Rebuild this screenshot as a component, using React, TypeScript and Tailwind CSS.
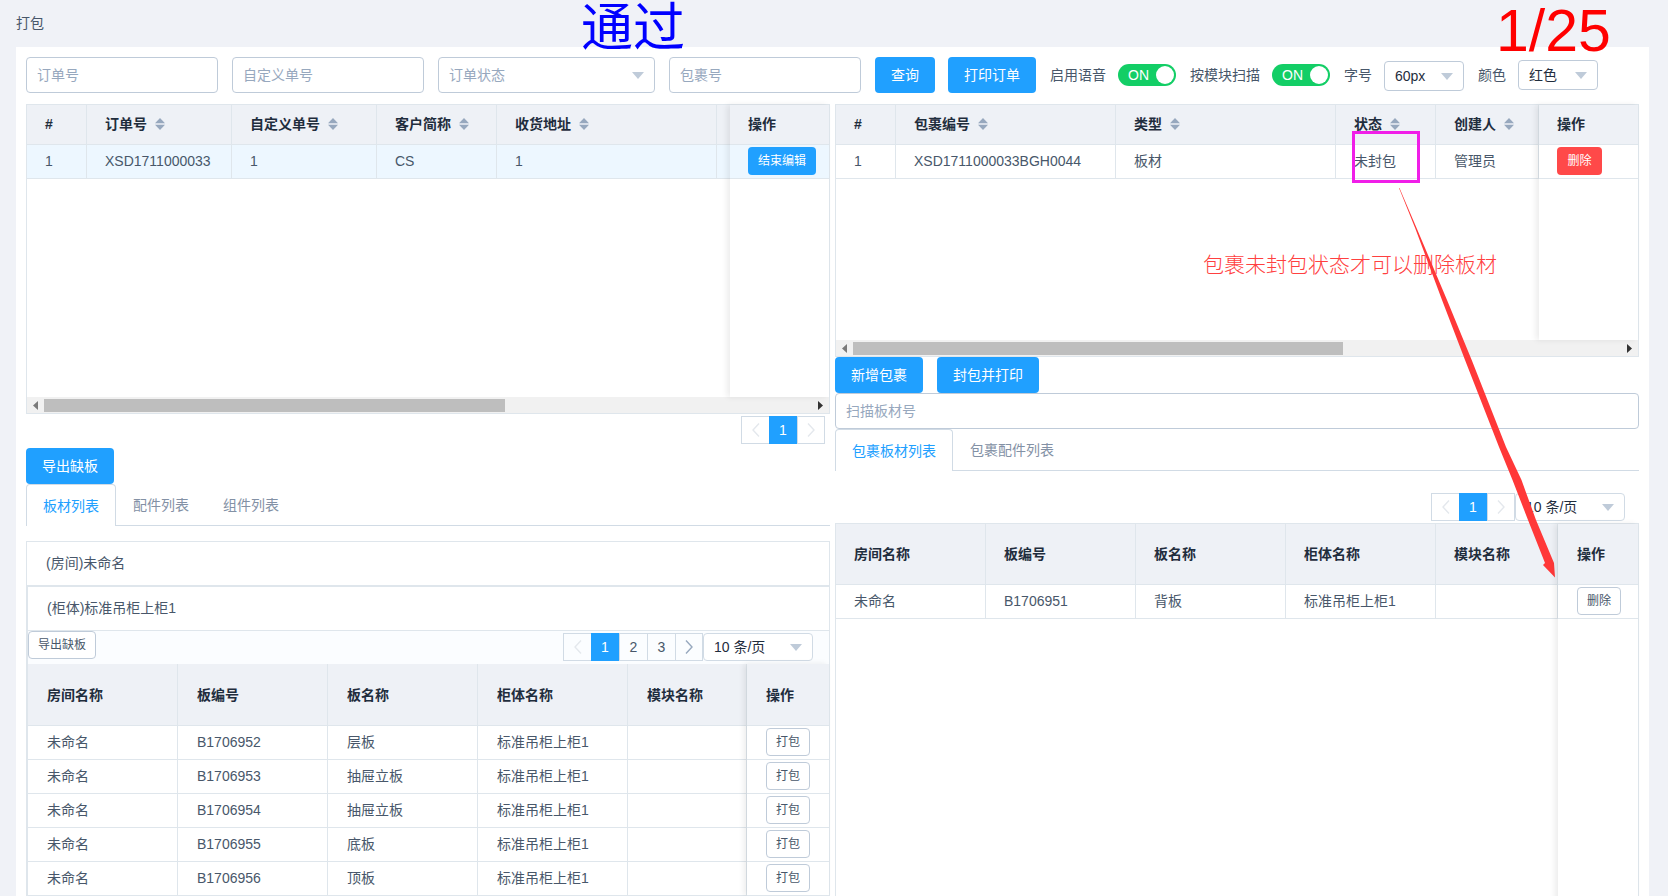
import type { ReactNode } from "react";

const orderCols = "grid-cols-[60px_145px_145px_120px_220px_13px]";
const packCols = "grid-cols-[60px_220px_220px_100px_103px]";
const boardCols = "grid-cols-[150px_150px_150px_150px_122px]";
const listCols = "grid-cols-[150px_150px_150px_150px_119px]";

function SortIcon() {
  return (
    <svg width="10" height="12" viewBox="0 0 10 12" className="ml-2 shrink-0" fill="#97a8be">
      <polygon points="0,5.2 5,0 10,5.2" />
      <polygon points="0,6.8 10,6.8 5,12" />
    </svg>
  );
}

function Caret() {
  return (
    <svg width="12" height="7" viewBox="0 0 12 7" fill="#bfcbd9" className="shrink-0">
      <polygon points="0,0 12,0 6,7" />
    </svg>
  );
}

function Chevron({ left, active }: { left?: boolean; active?: boolean }) {
  return (
    <svg width="8" height="14" viewBox="0 0 8 14" fill="none" stroke={active ? "#97a8be" : "#e4e8ed"} strokeWidth="1.4">
      <polyline points={left ? "7,0.5 1,7 7,13.5" : "1,0.5 7,7 1,13.5"} />
    </svg>
  );
}

function Button({ children, className = "" }: { children: ReactNode; className?: string }) {
  return (
    <button className={`flex h-9 items-center justify-center rounded-[4px] bg-[#20a0ff] px-4 text-sm text-white ${className}`}>
      {children}
    </button>
  );
}

function SmallButton({ children }: { children: ReactNode }) {
  return (
    <button className="flex h-7 w-[44px] items-center justify-center rounded-[4px] border border-[#bfcbd9] bg-white text-xs text-[#48576a]">
      {children}
    </button>
  );
}

function TextInput({ placeholder, className = "" }: { placeholder: string; className?: string }) {
  return (
    <input
      placeholder={placeholder}
      className={`h-9 rounded-[4px] border border-[#bfcbd9] bg-white px-[10px] text-sm text-[#1f2d3d] outline-none placeholder:text-[#97a8be] ${className}`}
    />
  );
}

function Select({ value, muted, className = "" }: { value: string; muted?: boolean; className?: string }) {
  return (
    <div className={`flex items-center justify-between rounded-[4px] border border-[#bfcbd9] bg-white pl-[10px] pr-[10px] text-sm ${muted ? "text-[#97a8be]" : "text-[#1f2d3d]"} ${className}`}>
      <span>{value}</span>
      <Caret />
    </div>
  );
}

function Switch() {
  return (
    <div className="flex h-[22px] w-[58px] items-center justify-between rounded-full bg-[#13ce66] pl-[10px] pr-[2px] text-sm text-white">
      <span>ON</span>
      <span className="h-[18px] w-[18px] rounded-full bg-white" />
    </div>
  );
}

function Pagination({ pages, hasNext }: { pages: number[]; hasNext?: boolean }) {
  return (
    <div className="flex h-7 text-sm text-[#48576a]">
      <div className="flex w-7 items-center justify-center border-y border-l border-[#d1dbe5]">
        <Chevron left />
      </div>
      {pages.map((p) => (
        <div
          key={p}
          className={
            p === 1
              ? "flex w-7 items-center justify-center bg-[#20a0ff] text-white"
              : "flex w-7 items-center justify-center border-y border-l border-[#d1dbe5]"
          }
        >
          {p}
        </div>
      ))}
      <div className="flex w-7 items-center justify-center border border-[#d1dbe5]">
        <Chevron active={hasNext} />
      </div>
    </div>
  );
}

function PageSize() {
  return <Select value="10 条/页" className="h-7 w-[110px] !border-[#d1dbe5]" />;
}

function Tabs({ items }: { items: string[] }) {
  return (
    <div className="flex h-[42px] border-b border-[#d1dbe5] text-sm">
      {items.map((t, i) => (
        <div
          key={t}
          className={
            i === 0
              ? "-mb-px flex h-[42px] items-center rounded-t-[4px] border-x border-t border-[#d1dbe5] bg-white px-4 text-[#20a0ff]"
              : "flex items-center px-[17px] text-[#8391a5]"
          }
        >
          {t}
        </div>
      ))}
    </div>
  );
}

function ScrollBar({ thumb }: { thumb: string }) {
  return (
    <div className="flex h-4 items-center bg-[#f1f1f1]">
      <div className="flex w-[17px] justify-center">
        <svg width="5" height="9" viewBox="0 0 5 9" fill="#7a7a7a"><polygon points="5,0 5,9 0,4.5" /></svg>
      </div>
      <div className={`mt-px h-[13px] bg-[#bebebe] ${thumb}`} />
      <div className="ml-auto flex w-[17px] justify-center">
        <svg width="5" height="9" viewBox="0 0 5 9" fill="#333"><polygon points="0,0 0,9 5,4.5" /></svg>
      </div>
    </div>
  );
}

function HeadRow({ cols, labels, sortable, height, cellClass = "pl-[18px]" }: { cols: string; labels: string[]; sortable?: boolean; height: string; cellClass?: string }) {
  return (
    <div className={`grid ${cols} ${height} bg-[#eef1f6] text-sm font-bold text-[#1f2d3d]`}>
      {labels.map((l, i) => (
        <div key={i} className={`flex items-center border-b border-r border-[#dfe6ec] ${cellClass}`}>
          {l}
          {sortable && l !== "#" && l !== "" ? <SortIcon /> : null}
        </div>
      ))}
    </div>
  );
}

function BodyRow({ cols, cells, current, cellClass = "pl-[18px]" }: { cols: string; cells: string[]; current?: boolean; cellClass?: string }) {
  return (
    <div className={`grid h-[34px] ${cols} text-sm text-[#48576a] ${current ? "bg-[#edf7ff]" : "bg-white"}`}>
      {cells.map((c, i) => (
        <div key={i} className={`flex items-center overflow-hidden whitespace-nowrap border-b border-r border-[#dfe6ec] pb-[2px] ${cellClass}`}>
          {c}
        </div>
      ))}
    </div>
  );
}

function FixedColumn({ width, headClass, children }: { width: string; headClass: string; children: ReactNode }) {
  return (
    <div className={`relative z-10 shrink-0 bg-white shadow-[-3px_0_6px_rgba(0,0,0,0.08)] ${width}`}>
      <div className={`flex items-center border-b border-[#dfe6ec] bg-[#eef1f6] text-sm font-bold text-[#1f2d3d] ${headClass}`}>
        操作
      </div>
      {children}
    </div>
  );
}

function ActionCell({ children, current, pad = "pl-[18px]" }: { children: ReactNode; current?: boolean; pad?: string }) {
  return (
    <div className={`flex h-[34px] items-center border-b border-[#dfe6ec] pb-px ${pad} ${current ? "bg-[#edf7ff]" : "bg-white"}`}>
      {children}
    </div>
  );
}

const boards = [
  ["B1706952", "层板"],
  ["B1706953", "抽屉立板"],
  ["B1706954", "抽屉立板"],
  ["B1706955", "底板"],
  ["B1706956", "顶板"],
];

function Annotations() {
  return (
    <>
      <span className="absolute left-[581px] top-0 text-[52px] leading-[56px] text-[#0000ff]">通过</span>
      <span className="absolute left-[1496px] top-0 text-[59px] leading-[62px] text-[#ff0000]">1/25</span>
      <span className="absolute left-[1203px] top-[249px] text-[21px] font-light leading-[32px] text-[#ff4040]">包裹未封包状态才可以删除板材</span>
      <div className="absolute left-[1352px] top-[131px] h-[52px] w-[68px] border-[3px] border-[#f01ee8]" />
      <div className="absolute left-[1569px] top-[579px] h-[44px] w-[60px] border-[3px] border-[#f01ee8]" />
      <svg className="absolute left-0 top-0" width="1668" height="896" fill="#ff3838">
        <polygon points="1399.5,188 1417,229 1447,300 1471.7,360 1506,447 1521.5,480 1536,520 1554,563 1555,577.5 1543,565 1545,563 1528,520 1512.5,480 1499,447 1465,360 1442,300 1415.5,229 1399,188" />
      </svg>
    </>
  );
}

export default function App() {
  return (
    <div className="relative h-[896px] w-[1668px] overflow-hidden bg-[#f0f2f7] font-['Liberation_Sans','Noto_Sans_CJK_SC',sans-serif]">
      <div className="flex h-[47px] items-center pb-[2px] pl-4 text-sm text-[#48576a]">打包</div>

      <div className="ml-4 h-[849px] w-[1633px] bg-white px-[10px] pt-[10px]">
        <div className="flex h-9 items-center text-sm text-[#48576a]">
          <TextInput placeholder="订单号" className="w-[192px]" />
          <TextInput placeholder="自定义单号" className="ml-[14px] w-[192px]" />
          <Select value="订单状态" muted className="ml-[14px] h-9 w-[217px]" />
          <TextInput placeholder="包裹号" className="ml-[14px] w-[192px]" />
          <Button className="ml-[14px]">查询</Button>
          <Button className="ml-[13px]">打印订单</Button>
          <span className="ml-[14px]">启用语音</span>
          <div className="ml-3"><Switch /></div>
          <span className="ml-[14px]">按模块扫描</span>
          <div className="ml-3"><Switch /></div>
          <span className="ml-[14px]">字号</span>
          <Select value="60px" className="ml-3 mt-[2px] h-[30px] w-[80px]" />
          <span className="ml-[14px]">颜色</span>
          <Select value="红色" className="ml-3 h-[30px] w-[80px]" />
        </div>

        <div className="mt-[11px] flex gap-[5px]">
          <div className="w-[804px] shrink-0">
            <div className="border border-[#dfe6ec]">
              <div className="flex h-[292px]">
                <div className="min-w-0 flex-1 overflow-hidden">
                  <HeadRow cols={orderCols} height="h-10" cellClass="pb-[2px] pl-[18px]" sortable labels={["#", "订单号", "自定义单号", "客户简称", "收货地址", ""]} />
                  <BodyRow cols={orderCols} current cells={["1", "XSD1711000033", "1", "CS", "1", ""]} />
                </div>
                <FixedColumn width="w-[99px]" headClass="h-10 pb-[2px] pl-[18px]">
                  <ActionCell current>
                    <button className="flex h-7 w-[68px] items-center justify-center rounded-[4px] bg-[#20a0ff] text-xs text-white">结束编辑</button>
                  </ActionCell>
                </FixedColumn>
              </div>
              <ScrollBar thumb="w-[461px]" />
            </div>

            <div className="mr-[5px] mt-[2px] flex justify-end">
              <Pagination pages={[1]} />
            </div>

            <Button className="mt-1 w-[88px]">导出缺板</Button>
            <Tabs items={["板材列表", "配件列表", "组件列表"]} />

            <div className="mt-[15px] border border-[#dfe6ec]">
              <div className="flex h-[45px] items-center border-b-2 border-[#dfe6ec] pb-[2px] pl-[19px] text-sm text-[#48576a]">(房间)未命名</div>
              <div className="border-l border-[#dfe6ec]">
                <div className="flex h-[44px] items-center border-b border-[#dfe6ec] pb-[2px] pl-[19px] text-sm text-[#48576a]">(柜体)标准吊柜上柜1</div>
                <div className="flex h-[33px] items-start justify-between bg-[#fbfdff] pr-4">
                  <button className="flex h-7 w-[68px] items-center justify-center rounded-[4px] border border-[#bfcbd9] bg-white text-xs text-[#48576a]">导出缺板</button>
                  <div className="mt-[2px] flex">
                    <Pagination pages={[1, 2, 3]} hasNext />
                    <PageSize />
                  </div>
                </div>
                <div className="flex">
                  <div className="min-w-0 flex-1 overflow-hidden">
                    <HeadRow cols={listCols} height="h-[62px]" cellClass="pl-[19px]" labels={["房间名称", "板编号", "板名称", "柜体名称", "模块名称"]} />
                    {boards.map((b) => (
                      <BodyRow key={b[0]} cols={listCols} cellClass="pl-[19px]" cells={["未命名", b[0], b[1], "标准吊柜上柜1", ""]} />
                    ))}
                  </div>
                  <FixedColumn width="w-[82px]" headClass="h-[62px] pl-[19px]">
                    {boards.map((b) => (
                      <ActionCell key={b[0]} pad="pl-[19px]"><SmallButton>打包</SmallButton></ActionCell>
                    ))}
                  </FixedColumn>
                </div>
              </div>
            </div>
          </div>

          <div className="w-[804px] shrink-0">
            <div className="border border-[#dfe6ec]">
              <div className="flex h-[235px]">
                <div className="min-w-0 flex-1 overflow-hidden">
                  <HeadRow cols={packCols} height="h-10" cellClass="pb-[2px] pl-[18px]" sortable labels={["#", "包裹编号", "类型", "状态", "创建人"]} />
                  <BodyRow cols={packCols} cells={["1", "XSD1711000033BGH0044", "板材", "未封包", "管理员"]} />
                </div>
                <FixedColumn width="w-[99px]" headClass="h-10 pb-[2px] pl-[18px]">
                  <ActionCell>
                    <button className="flex h-7 w-[45px] items-center justify-center rounded-[4px] bg-[#ff4949] text-xs text-white">删除</button>
                  </ActionCell>
                </FixedColumn>
              </div>
              <ScrollBar thumb="w-[490px]" />
            </div>

            <div className="flex gap-[14px]">
              <Button>新增包裹</Button>
              <Button>封包并打印</Button>
            </div>
            <TextInput placeholder="扫描板材号" className="block w-full" />
            <Tabs items={["包裹板材列表", "包裹配件列表"]} />

            <div className="mr-[14px] mt-[22px] flex justify-end">
              <Pagination pages={[1]} />
              <PageSize />
            </div>

            <div className="mt-[2px] flex h-[400px] border border-[#dfe6ec]">
              <div className="min-w-0 flex-1 overflow-hidden">
                <HeadRow cols={boardCols} height="h-[61px]" labels={["房间名称", "板编号", "板名称", "柜体名称", "模块名称"]} />
                <BodyRow cols={boardCols} cells={["未命名", "B1706951", "背板", "标准吊柜上柜1", ""]} />
              </div>
              <FixedColumn width="w-[80px]" headClass="h-[61px] pl-[19px]">
                <ActionCell pad="pl-[19px]"><SmallButton>删除</SmallButton></ActionCell>
              </FixedColumn>
            </div>
          </div>
        </div>
      </div>

      <Annotations />
    </div>
  );
}
